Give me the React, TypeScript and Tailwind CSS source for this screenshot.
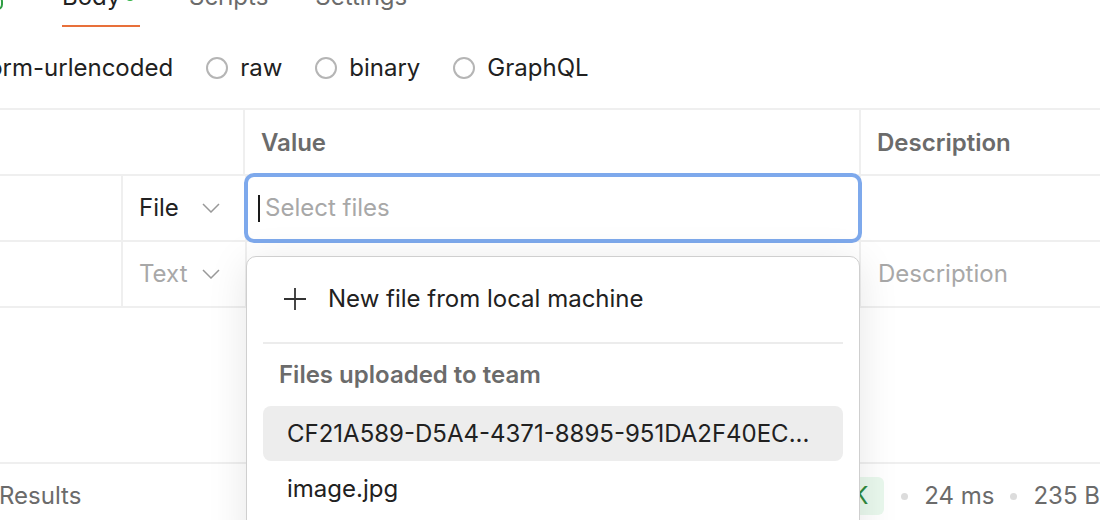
import React from "react";

const Chevron = () => (
  <svg width="18" height="10" viewBox="0 0 18 10" fill="none">
    <path d="M1 1 L9 9 L17 1" stroke="#999999" strokeWidth="1.5" />
  </svg>
);

const Radio = ({ label }: { label: string }) => (
  <div className="flex items-center gap-[12px]">
    <span className="w-[22px] h-[22px] rounded-full border-2 border-[#b5b5b5]" />
    <span>{label}</span>
  </div>
);

const Dot = () => <span className="w-[7px] h-[7px] rounded-full bg-[#dcdcdc]" />;

const App = () => {
  return (
    <div className="relative w-[1100px] h-[520px] overflow-hidden bg-white font-['Inter',sans-serif] text-[24px] text-[#212121]">
      {/* tabs */}
      <div className="flex items-end h-[27px]">
        <span className="ml-[-8px] mb-[17px] w-[11px] h-[14px] rounded-full border-2 border-[#2f9e44]" />
        <div className="ml-[59px] flex flex-col w-[78px]">
          <div className="flex items-center gap-[6px] leading-[24px] mt-[-16px]">
            <span>Body</span>
            <span className="w-[8px] h-[8px] rounded-full bg-[#2fb344]" />
          </div>
          <div className="mt-[16px] h-[2px] bg-[#e8703a]" />
        </div>
        <div className="ml-[49px] flex flex-col">
          <span className="leading-[24px] mt-[-16px] text-[#6b6b6b]">Scripts</span>
          <div className="mt-[16px] h-[2px]" />
        </div>
        <div className="ml-[47px] flex flex-col">
          <span className="leading-[24px] mt-[-16px] text-[#6b6b6b]">Settings</span>
          <div className="mt-[16px] h-[2px]" />
        </div>
      </div>

      {/* body types */}
      <div className="h-[81px] flex items-center gap-[33px]">
        <span className="ml-[-20px]">form-urlencoded</span>
        <Radio label="raw" />
        <Radio label="binary" />
        <Radio label="GraphQL" />
      </div>

      {/* table */}
      <div className="border-t-2 border-[#efefef]">
        <div className="flex h-[66px] border-b-2 border-[#efefef] font-semibold text-[#6b6b6b]">
          <div className="w-[245px] border-r-2 border-[#efefef]" />
          <div className="w-[616px] border-r-2 border-[#efefef] flex items-center pl-[16px] pt-[2px]">Value</div>
          <div className="flex-1 flex items-center pl-[16px] pt-[2px]">Description</div>
        </div>
        <div className="flex h-[66px] border-b-2 border-[#efefef]">
          <div className="w-[123px] border-r-2 border-[#efefef]" />
          <div className="w-[122px] flex items-center justify-between pl-[16px] pr-[25px]">
            <span>File</span>
            <Chevron />
          </div>
          <div className="relative w-[616px] border-l-2 border-r-2 border-[#efefef]">
            <div className="absolute left-[-3px] right-[-3px] top-[-3px] bottom-[-3px] rounded-[10px] border-[4px] border-[#7ea9ec] bg-white flex items-center pl-[10px]">
              <span className="w-[2px] h-[27px] bg-[#1a1a1a]" />
              <span className="ml-[5px] text-[#a8a8a8]">Select files</span>
            </div>
          </div>
          <div className="flex-1" />
        </div>
        <div className="flex h-[66px] border-b-2 border-[#efefef]">
          <div className="w-[123px] border-r-2 border-[#efefef]" />
          <div className="w-[122px] flex items-center justify-between pl-[16px] pr-[25px] text-[#a8a8a8]">
            <span>Text</span>
            <Chevron />
          </div>
          <div className="w-[616px] border-l-2 border-r-2 border-[#efefef]" />
          <div className="flex-1 flex items-center pl-[17px] text-[#a8a8a8]">Description</div>
        </div>
      </div>

      <div className="h-[154px]" />

      {/* response bar */}
      <div className="border-t-2 border-[#efefef] h-[66px] flex items-center">
        <span className="w-[821px] ml-[-1px] text-[#6b6b6b]">Results</span>
        <span className="h-[38px] px-[16px] flex items-center rounded-[6px] bg-[#e9f8ed] text-[#2f8a3e]">OK</span>
        <div className="ml-[17px] flex items-center gap-[16px] text-[#6b6b6b] whitespace-nowrap">
          <Dot />
          <span>24 ms</span>
          <Dot />
          <span>235 B</span>
        </div>
      </div>

      {/* file dropdown */}
      <div className="absolute left-[246px] top-[256px] w-[614px] h-[300px] rounded-[10px] border border-[#cfcfcf] bg-white shadow-[0_6px_40px_rgba(0,0,0,0.10)] px-[16px] pt-[16px]">
        <div className="h-[52px] flex items-center pl-[21px] gap-[22px]">
          <svg width="22" height="22" viewBox="0 0 22 22" fill="none">
            <path d="M11 0 V22 M0 11 H22" stroke="#333" strokeWidth="1.8" />
          </svg>
          <span>New file from local machine</span>
        </div>
        <div className="mt-[17px] h-[2px] bg-[#ececec]" />
        <div className="h-[62px] flex items-center pl-[16px] font-semibold text-[#6b6b6b]">Files uploaded to team</div>
        <div className="h-[55px] flex items-center pl-[24px] rounded-[8px] bg-[#ededed]">
          CF21A589-D5A4-4371-8895-951DA2F40EC...
        </div>
        <div className="h-[55px] flex items-center pl-[24px]">image.jpg</div>
      </div>
    </div>
  );
};

export default App;
